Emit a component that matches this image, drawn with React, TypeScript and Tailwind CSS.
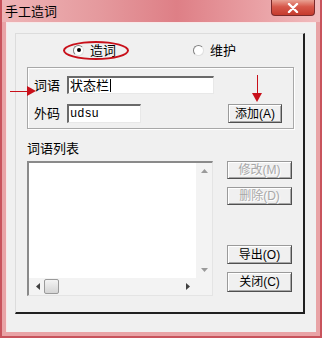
import React from 'react'

const font = "font-['Liberation_Sans','Noto_Sans_CJK_SC',sans-serif]"

const Btn = ({ label, disabled, className }: { label: string; disabled?: boolean; className?: string }) => (
  <div
    className={`flex items-center justify-center bg-[#f0f0f0] border border-[#9a9a9a] border-r-[#505050] border-b-[#505050] shadow-[inset_1px_1px_#ffffff,inset_-1px_-1px_#a8a8a8] text-[12px] leading-none ${
      disabled ? 'text-[#a8a8a8] [text-shadow:1px_1px_#ffffff]' : 'text-black'
    } ${className ?? ''}`}
  >
    {label}
  </div>
)

const Radio = ({ checked, label }: { checked?: boolean; label: string }) => (
  <div className="flex items-center gap-[6px]">
    <div className="w-[11px] h-[11px] rounded-full bg-white border border-[#808080] border-b-[#e0e0e0] border-r-[#e0e0e0] flex items-center justify-center">
      {checked && <div className="w-[4px] h-[4px] rounded-full bg-black" />}
    </div>
    <span className="text-[13px] leading-none text-black">{label}</span>
  </div>
)

const App = () => {
  return (
    <div className={`relative w-[322px] h-[338px] bg-[#e9a3a6] border-x-[2px] border-b-[2px] border-[#c8535c] ${font}`}>
      {/* title bar */}
      <div className="h-[22px] flex items-center pl-[3px] bg-[linear-gradient(90deg,#eeb4b6_0%,#e59a9e_30%,#de7f86_55%,#e9a0a4_80%,#f1bcbe_100%)]">
        <span className="text-[13px] text-black leading-none">手工造词</span>
      </div>
      <div className="absolute top-0 right-[5px] w-[44px] h-[16px] rounded-b-[4px] border border-t-0 border-[#7a2a2a] bg-[linear-gradient(180deg,#e9a193_0%,#d7584a_45%,#c53b2e_100%)] flex items-center justify-center">
        <svg width="12" height="10" viewBox="0 0 12 10">
          <path d="M2 1 L10 9 M10 1 L2 9" stroke="#ffffff" strokeWidth="2.4" strokeLinecap="round" />
        </svg>
      </div>

      {/* client */}
      <div className="mx-[4px] h-[310px] bg-[#f0f0f0] border-t border-l border-[#f8e8e8] pt-[10px] pl-[8px] pr-[8px]">
        <div className="relative w-[290px] h-[281px] border-t border-l border-[#dcdcdc] border-r-[2px] border-b-[2px] border-r-[#202020] border-b-[#202020] px-[11px]">
          {/* radio row */}
          <div className="h-[32px] flex items-center pl-[46px]">
            <div className="w-[120px]">
              <Radio checked label="造词" />
            </div>
            <Radio label="维护" />
          </div>
          <div className="absolute left-[47px] top-[7px] w-[66px] h-[19px] rounded-[50%] border-[2px] border-[#c8101a]" />

          {/* word group */}
          <div className="mt-[1px] w-[267px] h-[62px] border border-[#a8a8a8] shadow-[inset_1px_1px_#ffffff,1px_1px_#ffffff] pt-[8px] pl-[6px] pr-[11px]">
            <div className="flex items-center h-[18px]">
              <span className="w-[33px] text-[13px] leading-none text-black">词语</span>
              <div className="w-[147px] h-[18px] bg-white border-t-[2px] border-l-[2px] border-[#6a6a6a] border-r border-b border-r-[#e8e8e8] border-b-[#e8e8e8] flex items-center pl-[1px] text-[13px] leading-none text-black">
                状态栏<span className="ml-[1px] w-[1px] h-[13px] bg-black" />
              </div>
            </div>
            <div className="flex items-center h-[19px] mt-[10px]">
              <span className="w-[33px] text-[13px] leading-none text-black">外码</span>
              <div className="w-[74px] h-[19px] bg-white border-t-[2px] border-l-[2px] border-[#6a6a6a] border-r border-b border-r-[#e8e8e8] border-b-[#e8e8e8] flex items-center pl-[1px] font-['Liberation_Mono',monospace] text-[12px] leading-none text-black">
                udsu
              </div>
              <div className="ml-auto">
                <Btn label="添加(A)" className="w-[54px] h-[19px]" />
              </div>
            </div>
          </div>

          {/* list label */}
          <div className="mt-[13px] text-[13px] leading-none text-black">词语列表</div>

          <div className="mt-[6px] flex">
            {/* list box */}
            <div className="w-[186px] h-[135px] bg-[#f6f6f6] border-t-[2px] border-l-[2px] border-[#8a8a8a] border-r border-b border-r-[#e4e4e4] border-b-[#e4e4e4] flex flex-col">
              <div className="flex flex-1">
                <div className="flex-1 bg-white" />
                <div className="w-[16px] flex flex-col items-center justify-between py-[6px] bg-[#f3f3f3]">
                  <svg width="7" height="4" viewBox="0 0 7 4"><path d="M0 4 L3.5 0 L7 4 Z" fill="#9a9a9a" /></svg>
                  <svg width="7" height="4" viewBox="0 0 7 4"><path d="M0 0 L3.5 4 L7 0 Z" fill="#9a9a9a" /></svg>
                </div>
              </div>
              <div className="h-[17px] flex items-center">
                <div className="flex-1 h-full flex items-center pl-[7px] pr-[6px] bg-[#f3f3f3]">
                  <svg width="4" height="7" viewBox="0 0 4 7"><path d="M4 0 L0 3.5 L4 7 Z" fill="#404040" /></svg>
                  <div className="ml-[4px] w-[15px] h-[15px] rounded-[2px] border border-[#9a9a9a] bg-[linear-gradient(180deg,#f4f4f4,#d4d4d4)]" />
                  <div className="flex-1" />
                  <svg width="4" height="7" viewBox="0 0 4 7"><path d="M0 0 L4 3.5 L0 7 Z" fill="#404040" /></svg>
                </div>
                <div className="w-[16px] h-full bg-[#f3f3f3]" />
              </div>
            </div>

            {/* buttons */}
            <div className="ml-[14px] flex flex-col w-[65px]">
              <Btn label="修改(M)" disabled className="h-[18px]" />
              <Btn label="删除(D)" disabled className="h-[18px] mt-[8px]" />
              <Btn label="导出(O)" className="h-[19px] mt-[40px]" />
              <Btn label="关闭(C)" className="h-[20px] mt-[8px]" />
            </div>
          </div>
        </div>
      </div>

      {/* red annotation arrows */}
      <div className="absolute left-[8px] top-[86px] flex items-center">
        <div className="w-[17px] h-[1px] bg-[#c8101a]" />
        <svg width="9" height="10" viewBox="0 0 9 10"><path d="M0 0 L9 5 L0 10 Z" fill="#c8101a" /></svg>
      </div>
      <div className="absolute left-[250px] top-[75px] flex flex-col items-center">
        <div className="w-[1px] h-[18px] bg-[#c8101a]" />
        <svg width="10" height="9" viewBox="0 0 10 9"><path d="M0 0 L10 0 L5 9 Z" fill="#c8101a" /></svg>
      </div>
    </div>
  )
}

export default App
